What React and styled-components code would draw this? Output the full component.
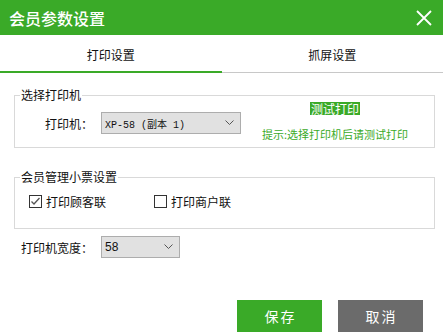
import React from 'react';
import styled, { createGlobalStyle } from 'styled-components';

const green = '#3aaa28';

const Global = createGlobalStyle`
    body {
        margin: 0;
        background: #fff;
        font-family: "Noto Sans CJK SC", "Liberation Sans", sans-serif;
        font-size: 12px;
        color: #111;
    }
`

const Dialog = styled.div`
    width: 443px;
    height: 336px;
    background: #fff;
    display: flex;
    flex-direction: column;
    overflow: hidden;
`

const TitleBar = styled.div`
    height: 35px;
    flex: none;
    background: ${green};
    display: flex;
    align-items: center;
    justify-content: space-between;
    padding: 0 9px 0 9px;
    box-sizing: border-box;
`

const Title = styled.h1`
    margin: 0;
    color: #fff;
    font-size: 16px;
    font-weight: 500;
    line-height: 1;
`

const Close = styled.button`
    border: none;
    background: none;
    padding: 0;
    width: 16px;
    height: 16px;
    display: flex;
    margin-right: 2px;
`

const Tabs = styled.div`
    display: flex;
    align-items: flex-end;
    height: 38px;
    flex: none;
`

const Tab = styled.div`
    flex: 1;
    height: 38px;
    box-sizing: border-box;
    display: flex;
    align-items: center;
    justify-content: center;
    padding-top: 2px;
    font-size: 12px;
    border-bottom: ${p => (p.$active ? `2px solid ${green}` : '1px solid #c8c8c8')};
`

const Body = styled.div`
    padding: 15px 8px 0 14px;
    display: flex;
    flex-direction: column;
`

const Group = styled.fieldset`
    margin: ${p => p.$gap || 0}px 0 0 0;
    border: 1px solid #d9d9d9;
    padding: ${p => p.$pad};
    min-width: 0;
`

const Legend = styled.legend`
    padding: 0 1px;
    margin-left: 5px;
    font-size: 12px;
    line-height: 14px;
`

const PrinterRow = styled.div`
    display: flex;
    align-items: flex-start;
    padding-left: 30px;
`

const Field = styled.div`
    display: flex;
    align-items: center;
    gap: 8px;
    margin-top: ${p => p.$top || 0}px;
    padding-left: ${p => p.$left || 0}px;
`

const Label = styled.span`
    font-size: 12px;
`

const Select = styled.div`
    width: ${p => p.$w}px;
    height: 22px;
    box-sizing: border-box;
    background: #e1e1e1;
    border: 1px solid #adadad;
    display: flex;
    align-items: center;
    justify-content: space-between;
    padding: 0 6px 0 3px;
    font-family: ${p => (p.$mono ? '"Liberation Mono", "Noto Sans CJK SC", monospace' : '"Liberation Sans", "Noto Sans CJK SC", sans-serif')};
    font-size: ${p => (p.$mono ? 10 : 12)}px;
    color: #111;
`

const TestBox = styled.div`
    margin-left: 21px;
    width: 146px;
    display: flex;
    flex-direction: column;
    align-items: center;
`

const TestButton = styled.span`
    background: ${green};
    color: #fff;
    font-size: 12px;
    line-height: 13px;
    padding: 0 1px;
`

const Hint = styled.span`
    margin-top: 13px;
    color: ${green};
    font-size: 11px;
    line-height: 13px;
    white-space: nowrap;
`

const CheckRow = styled.div`
    display: flex;
    align-items: center;
    padding-left: 14px;
`

const Check = styled.label`
    display: flex;
    align-items: center;
    gap: 4px;
    width: 125px;
    font-size: 12px;
`

const Box = styled.span`
    width: 13px;
    height: 13px;
    box-sizing: border-box;
    border: 1px solid #333;
    background: #fff;
    display: flex;
    align-items: center;
    justify-content: center;
`

const Footer = styled.div`
    display: flex;
    justify-content: flex-end;
    gap: 16px;
    padding: 42px 12px 0 0;
`

const Button = styled.button`
    width: 85px;
    height: 32px;
    border: none;
    background: ${p => (p.$primary ? green : '#6b6b6b')};
    color: #fff;
    font-family: "Noto Sans CJK SC", sans-serif;
    font-size: 14px;
    letter-spacing: 2px;
    text-indent: 2px;
`

const Chevron = () => (
    <svg width="9" height="6" viewBox="0 0 9 6">
        <polyline points="0.5,0.5 4.5,4.5 8.5,0.5" fill="none" stroke="#555" strokeWidth="1" />
    </svg>
)

const Tick = () => (
    <svg width="11" height="11" viewBox="0 0 11 11">
        <polyline points="1.5,5.5 4,8 9.5,2" fill="none" stroke="#555" strokeWidth="1.3" />
    </svg>
)

export default function App() {
    return (
        <Dialog>
            <Global />
            <TitleBar>
                <Title>会员参数设置</Title>
                <Close>
                    <svg width="16" height="16" viewBox="0 0 16 16">
                        <path d="M1 1 L15 15 M15 1 L1 15" stroke="#fff" strokeWidth="1.8" />
                    </svg>
                </Close>
            </TitleBar>
            <Tabs>
                <Tab $active>打印设置</Tab>
                <Tab>抓屏设置</Tab>
            </Tabs>
            <Body>
                <Group $pad="0 0 6px 0">
                    <Legend>选择打印机</Legend>
                    <PrinterRow>
                        <Field $top={10}>
                            <Label>打印机：</Label>
                            <Select $w={140} $mono>
                                <span>XP-58 (副本 1)</span>
                                <Chevron />
                            </Select>
                        </Field>
                        <TestBox>
                            <TestButton>测试打印</TestButton>
                            <Hint>提示:选择打印机后请测试打印</Hint>
                        </TestBox>
                    </PrinterRow>
                </Group>
                <Group $gap={22} $pad="9px 0 18px 0">
                    <Legend>会员管理小票设置</Legend>
                    <CheckRow>
                        <Check>
                            <Box><Tick /></Box>
                            打印顾客联
                        </Check>
                        <Check>
                            <Box />
                            打印商户联
                        </Check>
                    </CheckRow>
                </Group>
                <Field $top={7} $left={7}>
                    <Label>打印机宽度：</Label>
                    <Select $w={79}>
                        <span>58</span>
                        <Chevron />
                    </Select>
                </Field>
                <Footer>
                    <Button $primary>保存</Button>
                    <Button>取消</Button>
                </Footer>
            </Body>
        </Dialog>
    );
}
